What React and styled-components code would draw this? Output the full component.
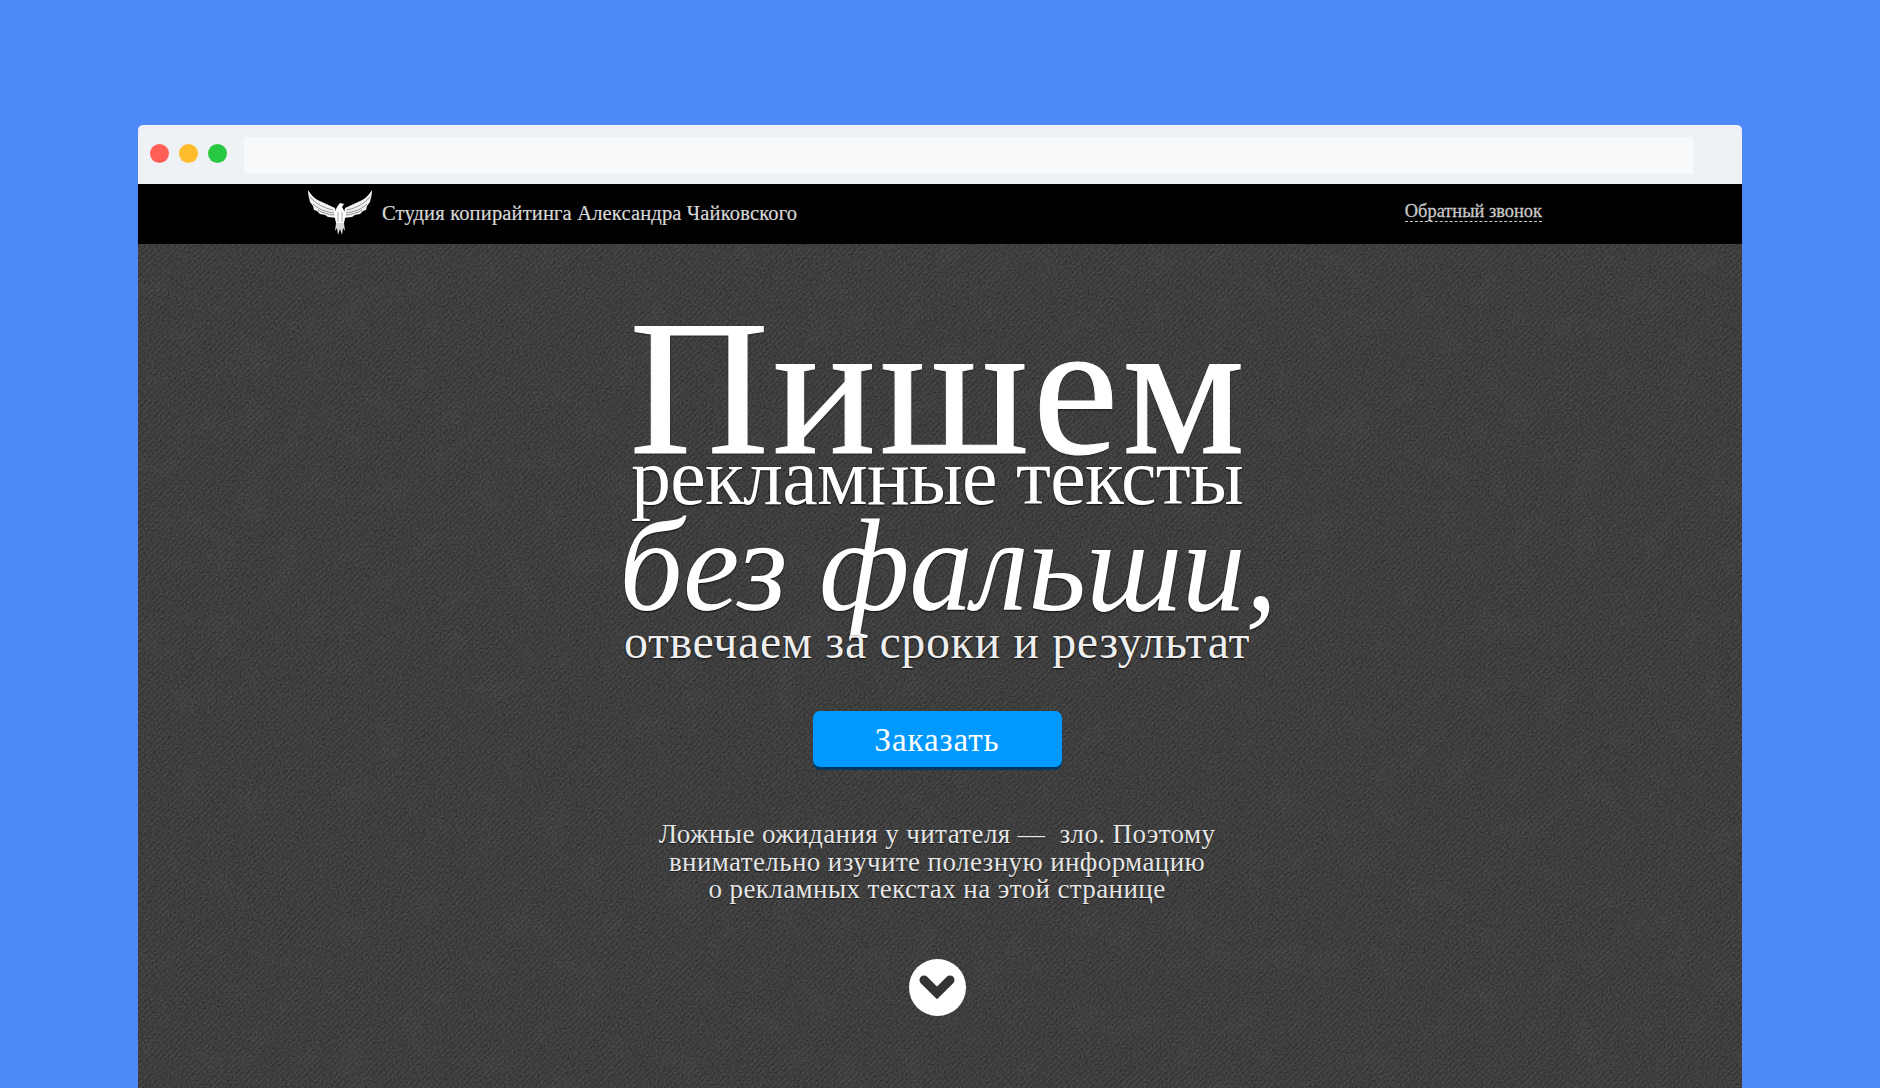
import React from "react";
import styled, { createGlobalStyle } from "styled-components";

const Global = createGlobalStyle`
  html, body {
    margin: 0;
    padding: 0;
    background: #4d8af9;
  }
`;

const SERIF = `"Liberation Serif", "Times New Roman", serif`;

const Page = styled.div`
  width: 1880px;
  height: 1088px;
  box-sizing: border-box;
  padding: 125px 138px 0;
  background: #4d8af9;
  overflow: hidden;
`;

const Window = styled.div`
  width: 1604px;
  height: 963px;
  border-radius: 5px 5px 0 0;
  overflow: hidden;
  display: flex;
  flex-direction: column;
`;

// Верхняя панель окна браузера
const Chrome = styled.div`
  height: 59px;
  flex: none;
  background: #eef1f6;
  display: flex;
  align-items: center;
  padding: 0 49px 0 12px;
  box-sizing: border-box;
`;

const Dots = styled.div`
  display: flex;
  gap: 10px;
  margin: 0 17px 2px 0;
`;

const Dot = styled.span`
  width: 19px;
  height: 19px;
  border-radius: 50%;
  background: ${(p) => p.$color};
`;

const UrlBar = styled.div`
  flex: 1;
  height: 37px;
  margin-top: 1px;
  background: #f7f9fb;
  border-radius: 3px;
`;

const Header = styled.header`
  height: 60px;
  flex: none;
  background: #000;
  display: flex;
  align-items: center;
  justify-content: space-between;
  padding: 0 200px 0 170px;
  box-sizing: border-box;
`;

const Brand = styled.div`
  display: flex;
  align-items: center;
  gap: 10px;
  margin-top: -3px;
`;

const BrandName = styled.span`
  font: 20.5px ${SERIF};
  color: #d8d8d8;
  letter-spacing: 0.16px;
  margin-top: 1px;
  -webkit-text-stroke: 0.2px #d8d8d8;
`;

const Callback = styled.a`
  font: 18.4px ${SERIF};
  color: #c8c8c8;
  border-bottom: 1px dashed #c8c8c8;
  line-height: 20px;
  margin-bottom: 5px;
  -webkit-text-stroke: 0.3px #c8c8c8;
`;

// Основной экран с текстурой ткани
const Hero = styled.main`
  flex: 1;
  position: relative;
  box-sizing: border-box;
  padding: 85px 6px 0 0;
  display: flex;
  flex-direction: column;
  align-items: center;
  background-color: #444;
`;

const Texture = styled.svg`
  position: absolute;
  inset: 0;
  width: 100%;
  height: 100%;
`;

const Line = styled.div`
  position: relative;
  margin-left: ${(p) => p.$shift || 0}px;
  font-family: ${SERIF};
  font-size: ${(p) => p.$size}px;
  line-height: ${(p) => p.$height}px;
  font-style: ${(p) => (p.$italic ? "italic" : "normal")};
  letter-spacing: ${(p) => p.$spacing || 0}px;
  color: ${(p) => p.$color || "#fff"};
  white-space: nowrap;
  transform: scaleX(${(p) => p.$scale || 1});
  -webkit-text-stroke: ${(p) => p.$stroke || 0}px ${(p) => p.$color || "#fff"};
  text-shadow: 0 1px 2px rgba(0, 0, 0, 0.75), 0 0 1px rgba(0, 0, 0, 0.5);
`;

const OrderButton = styled.button`
  position: relative;
  margin-top: 52px;
  width: 249px;
  height: 56px;
  flex: none;
  border: 0;
  border-radius: 7px;
  background: #0099ff;
  box-shadow: 0 3px 0 #04365e;
  color: #fff;
  font: 33px ${SERIF};
  letter-spacing: 0.9px;
  padding: 2px 0 0;
`;

const Lead = styled.p`
  position: relative;
  margin: 54px 0 0;
  font: 27px/27.5px ${SERIF};
  letter-spacing: 0.4px;
  color: #e6e6e6;
  text-align: center;
  white-space: pre-line;
  text-shadow: 0 1px 1px rgba(0, 0, 0, 0.6);
`;

const Down = styled.div`
  position: relative;
  margin-top: 55px;
  width: 57px;
  height: 57px;
  flex: none;
  border-radius: 50%;
  background: #fff;
  display: flex;
  align-items: center;
  justify-content: center;
`;

const Logo = () => (
  <svg width="64" height="46" viewBox="0 0 64 46">
    <defs>
      <g id="wing">
        <path d="M0 0C3 5 8 10 14 12L27 18L29 28L20 27L17 25L12 24L9 21L6 20L5 16L2 12C1 8 0 4 0 0Z" fill="#f2f2f2" />
        <path d="M2 7C8 14 16 18 25 20M5 14C10 19 18 22 26 23M10 20C15 23 21 25 27 25" fill="none" stroke="#000" strokeWidth="0.8" opacity="0.5" />
      </g>
    </defs>
    <use href="#wing" />
    <use href="#wing" transform="matrix(-1 0 0 1 64 0)" />
    <path d="M29 17L32 13L36 14L34 17L38 24L36 33L28 33L26 24Z" fill="#fff" />
    <path d="M28 33L27 41L29 38L30 45L32 39L34 45L35 38L37 41L36 33Z" fill="#d8d8d8" />
    <path d="M30 22L30 32M34 22L34 32" stroke="#000" strokeWidth="0.7" opacity="0.5" />
  </svg>
);

const Chevron = () => (
  <svg width="38" height="30" viewBox="0 0 38 30">
    <path d="M6 8L19 21L32 8" fill="none" stroke="#333" strokeWidth="9" strokeLinecap="round" />
  </svg>
);

// Шум и плетение ткани на фоне
const Cloth = () => (
  <Texture aria-hidden="true">
    <defs>
      <filter id="grain" x="0" y="0" width="100%" height="100%">
        <feTurbulence type="fractalNoise" baseFrequency="0.5" numOctaves="2" seed="4" />
        <feColorMatrix values="0 0 0 0 0  0 0 0 0 0  0 0 0 0 0  1.6 0 0 0 -0.55" />
      </filter>
      <filter id="blotch" x="0" y="0" width="100%" height="100%">
        <feTurbulence type="fractalNoise" baseFrequency="0.03" numOctaves="3" seed="9" />
        <feColorMatrix values="0 0 0 0 1  0 0 0 0 1  0 0 0 0 1  0.9 0 0 0 -0.4" />
      </filter>
      <pattern id="weave" width="6" height="6" patternUnits="userSpaceOnUse">
        <path d="M0 6L6 0M-1 1L1 -1M5 7L7 5" stroke="#fff" strokeOpacity="0.035" strokeWidth="1.2" />
        <path d="M0 3L3 0M3 6L6 3" stroke="#000" strokeOpacity="0.07" strokeWidth="1" />
      </pattern>
    </defs>
    <rect width="100%" height="100%" fill="url(#weave)" />
    <rect width="100%" height="100%" filter="url(#grain)" opacity="0.4" />
    <rect width="100%" height="100%" filter="url(#blotch)" opacity="0.05" />
  </Texture>
);

const App = () => {
  return (
    <Page>
      <Global />
      <Window>
        <Chrome>
          <Dots>
            <Dot $color="#ff5f57" />
            <Dot $color="#ffbd2e" />
            <Dot $color="#28c940" />
          </Dots>
          <UrlBar />
        </Chrome>
        <Header>
          <Brand>
            <Logo />
            <BrandName>Студия копирайтинга Александра Чайковского</BrandName>
          </Brand>
          <Callback>Обратный звонок</Callback>
        </Header>
        <Hero>
          <Cloth />
          <Line $size={193} $height={118} $spacing={4} $stroke={1} $shift={4}>Пишем</Line>
          <Line $size={80} $height={60} $spacing={-0.75}>рекламные тексты</Line>
          <Line $size={131} $height={117} $italic $scale={0.97} $shift={22}>без фальши,</Line>
          <Line $size={48} $height={35} $spacing={0.6} $color="#eee">отвечаем за сроки и результат</Line>
          <OrderButton>Заказать</OrderButton>
          <Lead>{"Ложные ожидания у читателя — \u00a0зло. Поэтому\nвнимательно изучите полезную информацию\nо рекламных текстах на этой странице"}</Lead>
          <Down>
            <Chevron />
          </Down>
        </Hero>
      </Window>
    </Page>
  );
};

export default App;
